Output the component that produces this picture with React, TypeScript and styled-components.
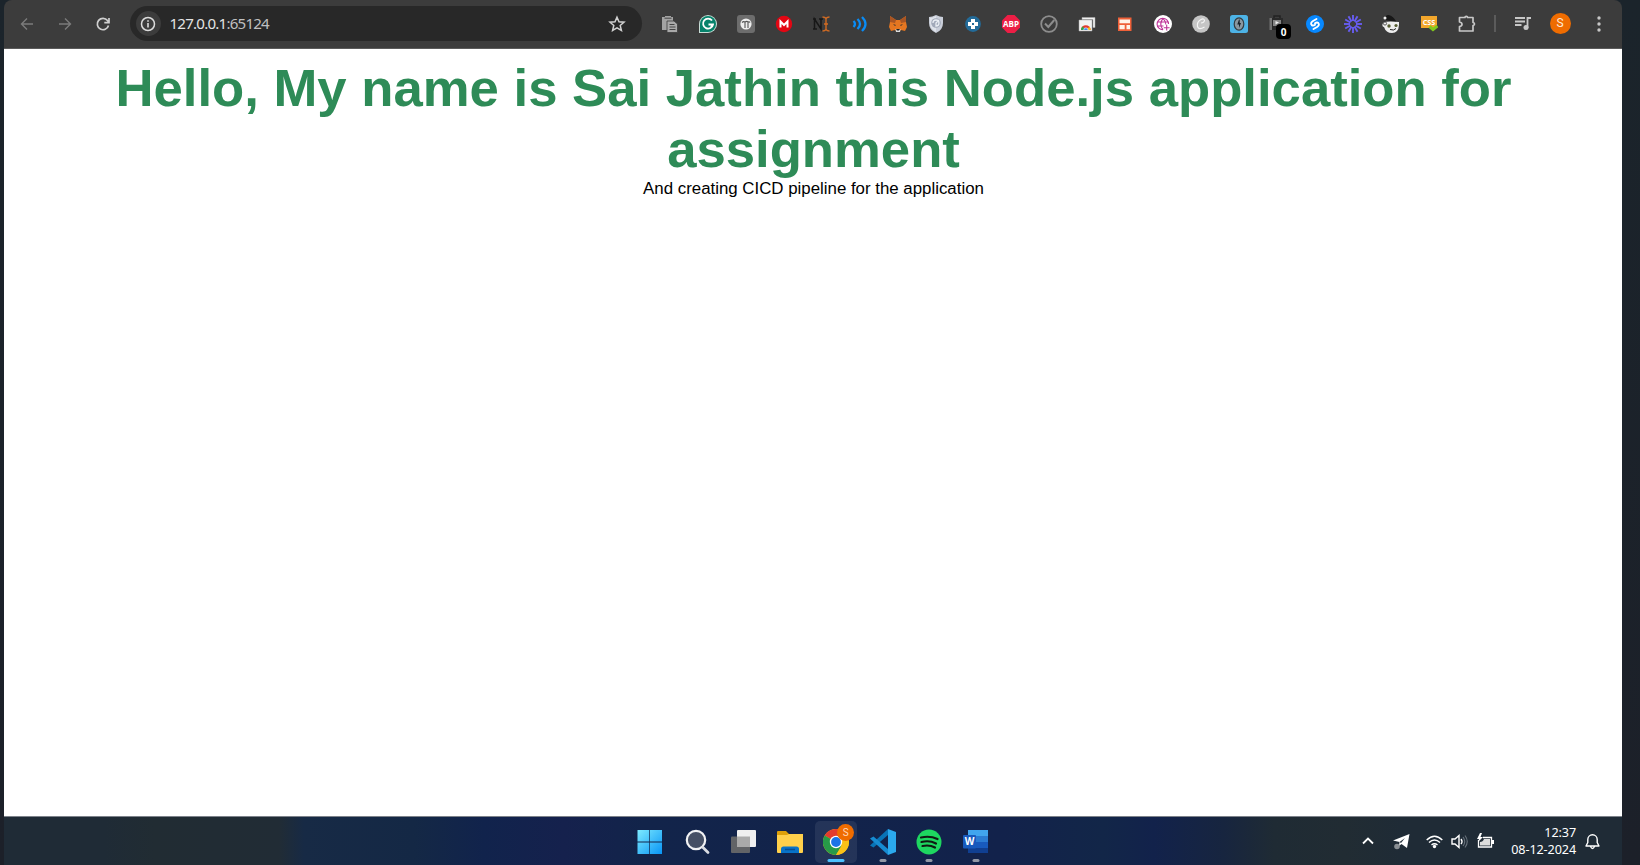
import React from "react";
import styled, { createGlobalStyle } from "styled-components";

const Global = createGlobalStyle`
  *{box-sizing:border-box}
  body{margin:0;background:#1b2229;font-family:"Liberation Sans",Arial,sans-serif;overflow:hidden}
`;
const Desktop = styled.div`
  width:1640px;height:865px;padding:0 18px 0 4px;
  background:linear-gradient(#1b242b,#1c2029);
  display:flex;flex-direction:column;
`;
const Toolbar = styled.header`
  height:49px;flex:none;background:#3c3c3c;border-bottom:1px solid #5b5b5b;
  border-radius:8px 8px 0 0;display:flex;align-items:center;padding:0 8px 1px 4px;
`;
const NavButton = styled.button<{ $dim?: boolean }>`
  width:38px;height:38px;border:0;padding:0;background:none;display:grid;place-items:center;
  color:${(p) => (p.$dim ? "#7b7b7b" : "#d0d0d0")};
`;
const AddressBar = styled.div`
  width:512px;height:35px;margin-left:8px;border-radius:18px;background:#282828;
  display:flex;align-items:center;padding:0 16px 0 5.5px;
`;
const SiteInfo = styled.span`
  width:25px;height:25px;border-radius:50%;background:#3c3c3c;color:#dcdcdc;display:grid;place-items:center;
`;
const Url = styled.span`
  flex:1;margin-left:9px;margin-top:-1px;font:15.1px "Noto Sans",sans-serif;letter-spacing:-0.78px;color:#e3e3e3;
  span{color:#c0c0c0}
`;
const Extensions = styled.div`
  display:flex;margin-left:9px;
`;
const Extension = styled.div`
  width:37.95px;height:38px;display:grid;place-items:center;position:relative;
`;
const Badge = styled.span`
  position:absolute;left:18px;top:19px;width:15px;height:15px;border-radius:4px;background:#000;color:#fff;
  font:bold 10px/16px "Open Sans",sans-serif;text-align:center;
`;
const Divider = styled.i`
  width:2px;height:17px;background:#5b5b5b;margin-left:8px;
`;
const MediaButton = styled.span`
  margin-left:18px;display:grid;color:#c7c7c7;
`;
const Avatar = styled.span`
  width:21px;height:21px;border-radius:50%;background:#ef6c00;color:#ffe9d8;margin-left:18px;margin-top:-1px;
  font:12px/21px Roboto,sans-serif;text-align:center;
`;
const MenuButton = styled.span`
  margin-left:19px;display:grid;color:#c7c7c7;
`;
const Page = styled.main`
  flex:1;background:#fff;text-align:center;padding:8px 7px 0 8px;
`;
const Title = styled.h1`
  margin:0;color:#2e8b57;font-size:52.68px;line-height:61px;font-weight:bold;
`;
const Subtitle = styled.p`
  margin:0;color:#000;font-size:16.85px;line-height:19px;
`;
const Taskbar = styled.footer`
  height:49px;flex:none;border-top:1px solid #7d828a;display:grid;grid-template-columns:1fr auto 1fr;
  background:linear-gradient(90deg,#1f2b36 0,#1f2b36 100px,#212c33 150px,#212c35 275px,#172a45 300px,#142845 410px,#11234c 480px,#15214d 560px,#12244a 640px,#12224b 1000px,#122648 1100px,#12224b 1150px,#17253f 1220px,#1f2b34 1270px,#212c33 1340px,#1f2b36 1400px);
`;
const Apps = styled.div`
  grid-column:2;display:flex;
`;
const AppButton = styled.div<{ $active?: boolean }>`
  width:42px;height:42px;margin:4px 2.25px 0;border-radius:5px;position:relative;display:grid;place-items:center;
  background:${(p) => (p.$active ? "rgba(255,255,255,.08)" : "none")};
`;
const Indicator = styled.i<{ $active?: boolean }>`
  position:absolute;bottom:1px;left:50%;transform:translateX(-50%);height:3px;border-radius:2px;
  width:${(p) => (p.$active ? 17 : 7)}px;background:${(p) => (p.$active ? "#4cc2ff" : "#9298a6")};
`;
const ProfileBadge = styled.span`
  position:absolute;left:22px;top:3px;width:17px;height:17px;border-radius:50%;background:#ef6c00;color:#ffd9bd;
  font:10px/17px Roboto,sans-serif;text-align:center;
`;
const Tray = styled.div`
  display:flex;align-items:center;justify-content:flex-end;padding-right:21px;color:#fff;
  svg{flex:none}
`;
const TrayItem = styled.span<{ $gap: number }>`
  display:grid;margin-right:${(p) => p.$gap}px;
`;
const Clock = styled.time`
  font:12.6px/17px "Noto Sans",sans-serif;letter-spacing:-.1px;text-align:right;margin-right:8px;white-space:nowrap;
`;

type DrawProps = { size?: number; box?: string; children: React.ReactNode };
const Draw = ({ size = 18, box = "0 0 18 18", children }: DrawProps) => (
  <svg width={size} height={size} viewBox={box} fill="none">{children}</svg>
);

const extensions: React.ReactNode[] = [
  <Draw key="copy"><path d="M1 2h3V1h6v1h2v4H6v9H1z" fill="#a3a3a3" /><path d="M3.500 3.200h7" stroke="#444" /><path d="M6 6h7l3.500 3v8.500H6z" fill="#a9a9a9" stroke="#3c3c3c" strokeWidth=".8" /><path d="M8.500 9.500h5M8.500 12h6M8.500 14.500h6" stroke="#444" /></Draw>,
  <Draw key="grammar"><path d="M0 18V9a9 9 0 1 1 9 9z" fill="#c8ddd6" /><path d="M1 17V9a8 8 0 1 1 8 8z" fill="#06826b" /><path d="M13 5.500A5 5 0 1 0 14 9.500h-4.500M14 9l-2 3" stroke="#fff" strokeWidth="1.800" /></Draw>,
  <Draw key="m"><rect width="18" height="18" rx="3" fill="#6d6d6d" /><circle cx="9" cy="9" r="5.600" fill="#eee" /><path d="M5 7.500q1.500-1.500 3-.5v6M8 7q2-1.200 3 0v6M11 7q1.500-.5 2 .5" stroke="#555" strokeWidth="1.100" /></Draw>,
  <Draw key="mega"><circle cx="9" cy="9" r="8.200" fill="#e30613" /><path d="M5.500 12.500V6.500L9 10l3.500-3.500v6" stroke="#fff" strokeWidth="2" /></Draw>,
  <Draw key="ni"><path d="M1.500 14V4l6.500 10V4M0 4h3M0 14h4M6 4h4" stroke="#171717" strokeWidth="1.500" /><path d="M9.500 2q2.500 0 3.500 1.500Q14 2 16.500 2M13 3v12M9.500 16q2.500 0 3.500-1.500 1 1.500 3.500 1.500M11 9h4" stroke="#d26b22" strokeWidth="1.400" /></Draw>,
  <Draw key="waves"><path d="M2.500 6q3 3 0 6M6.500 4q5 5 0 10M11 2q7 7 0 14" stroke="#098cf5" strokeWidth="2.300" /></Draw>,
  <Draw key="fox"><path d="m1 1 6 4h4l6-4v6l1 5-2 4-4-1-2 2H8l-2-2-4 1-2-4 1-5z" fill="#e47621" /><path d="m1 1 6 4-1 3-5-1zM17 1l-6 4 1 3 5-1z" fill="#a95523" /><path d="m4 9 3 1-1 1zM14 9l-3 1 1 1z" fill="#333" /><path d="M6.500 14h5L11 17H7z" fill="#ddd" /><path d="M7 14h4l-1 1.500H8z" fill="#222" /></Draw>,
  <Draw key="shield"><path d="M9 0q4 2 7 2v6q0 7-7 10Q2 15 2 8V2q3 0 7-2z" fill="#c9ced9" /><path d="M9 1v16Q3 14 3 8V3q3 0 6-2z" fill="#dfe3ea" /><circle cx="9" cy="8" r="4.800" fill="#a1a9b9" /><path d="M6 8a3 3 0 1 1 3 3V8l3-3" stroke="#e9edf3" strokeWidth="1.300" /></Draw>,
  <Draw key="plus"><circle cx="9" cy="9" r="7.900" fill="#236b99" /><path d="M9 4v10M4 9h10" stroke="#fff" strokeWidth="4" /><path d="M8 9h2" stroke="#236b99" strokeWidth="2" /></Draw>,
  <Draw key="abp"><path d="M5.500 0h7L18 5.500v7L12.500 18h-7L0 12.500v-7z" fill="#ed1e45" /><text x="9" y="12.200" textAnchor="middle" fontFamily="Open Sans, sans-serif" fontWeight="bold" fontSize="9" textLength="16" lengthAdjust="spacingAndGlyphs" fill="#fff">ABP</text></Draw>,
  <Draw key="check"><circle cx="9" cy="9" r="7.800" stroke="#8d8d8d" strokeWidth="1.800" /><path d="m5 8.500 3.300 3.500 6-7" stroke="#8d8d8d" strokeWidth="2" /></Draw>,
  <Draw key="store"><path d="M4 2.500h13v10h-2v-8H4z" fill="#f0f0f0" stroke="#aaa" strokeWidth=".5" /><path d="M1 5h13v11H1z" fill="#f2f2f2" stroke="#aaa" strokeWidth=".5" /><path d="M3 15a4.800 4.800 0 0 1 9.600 0" fill="#e33b2e" /><path d="M3 15a5 5 0 0 1 1.500-3.500L8 15z" fill="#2ba84a" /><path d="m8 15 3.500-3.300q1.200 1.300 1.200 3.300z" fill="#f9bd15" /><path d="M5.700 15a2.200 2.200 0 0 1 4.400 0" fill="#4285f4" stroke="#fff" strokeWidth=".6" /></Draw>,
  <Draw key="layout"><rect x="2" y="2.500" width="13.500" height="13.500" fill="#ef6038" /><path d="M3.500 4.500h10.500v3.700H3.500zM3.500 10h5.200v4.300H3.500zM10.500 10H14v4.300h-3.500z" fill="#fff3e8" /></Draw>,
  <Draw key="globe"><circle cx="9" cy="9" r="9" fill="#fff" /><g stroke="#bd3197" strokeWidth="1.100"><path d="M14.500 9A5.700 5.700 0 1 0 9 14.700M9 3.300q-4.500 5.700 0 11.400M9 3.300q3 3 2.800 6.200M4 7h10M4 11h5.500M12.700 9.800v5.800M9.800 12.700h5.800" /></g></Draw>,
  <Draw key="c"><circle cx="9" cy="9" r="8.800" fill="#c5c5c5" /><path d="M12.500 5.500Q12 3 9 4.500 4.500 7 5.500 11.500q1 4 7 .5M9 8q3 0 3.500-2.500" stroke="#f5f5f5" strokeWidth="1.200" /></Draw>,
  <Draw key="bolt"><rect width="18" height="18" rx="2.500" fill="#4db3e6" /><ellipse cx="9" cy="9" rx="4.800" ry="6.200" fill="#8997a0" stroke="#343c42" strokeWidth="1.200" /><path d="m9 4.500-1.700 5H9V13l2-5H9.700V4.500z" fill="#18222b" /></Draw>,
  <Draw key="bag"><path d="M2 3h13v12H2z" fill="#292929" /><path d="M1.500 3H4v12H1.500z" fill="#707070" /><path d="M6 3V1h6v2" stroke="#222" strokeWidth="1.500" /><path d="M5 5h8v6H5z" fill="#858585" /><path d="m7.500 6 3.500 1.500-3.500 2z" fill="#eee" /></Draw>,
  <Draw key="shazam"><circle cx="9" cy="9" r="9" fill="#0788ff" /><path d="M10.500 4 7 6Q4 8 5.700 10q1.300 1.300 3.300-.3M7.500 14l3.500-2q3-2 1.300-4Q11 6.700 9 8.300" stroke="#fff" strokeWidth="1.900" strokeLinecap="round" /></Draw>,
  <Draw key="burst"><g stroke="#675cf0" strokeWidth="1.900">{Array.from({ length: 12 }, (_, i) => <path key={i} d="M9 0v6" transform={`rotate(${i * 30} 9 9)`} />)}</g><circle cx="9" cy="9" r="3.700" stroke="#675cf0" /></Draw>,
  <Draw key="face"><path d="M3.500 5q-1-5 3-5 5 1 8 7z" fill="#181818" /><circle cx="3" cy="3" r="1.500" fill="#eee" /><path d="M2 7q6-1 15 0v3q-.5 8-7 8-6 0-8-6-2 0-1.500-3z" fill="#eee" /><circle cx="3" cy="8.500" r="1.600" fill="#eee" stroke="#222" strokeWidth=".7" /><circle cx="7" cy="11" r="1.700" fill="#565d31" /><circle cx="14" cy="10.500" r="1.600" fill="#565d31" /><path d="M8 14.500q4 1.500 6-1" stroke="#222" /></Draw>,
  <Draw key="css"><path d="M1 1h16v12H1z" fill="#f3a72c" /><text x="9" y="9.500" textAnchor="middle" fontFamily="Open Sans, sans-serif" fontWeight="bold" fontSize="7.200" textLength="12.500" lengthAdjust="spacingAndGlyphs" fill="#fff">CSS</text><path d="m9.500 11.500 3.500 3 4.500-3.500" stroke="#82c91e" strokeWidth="3" /></Draw>,
  <Draw key="puzzle"><path d="M1.500 2.500H7q0-1.200 1.300-1.200t1.300 1.200H15v5q1.500.2 1.500 1.500T15 10.500V16H1.500v-4.500q2.500-.3 2.500-2.200T1.500 7z" stroke="#c7c7c7" strokeWidth="1.700" strokeLinejoin="round" /></Draw>,
];

const Back = () => <Draw size={16} box="0 0 16 16"><path d="M14 8H2.500M8 2.500 2.500 8 8 13.500" stroke="currentColor" strokeWidth="1.400" /></Draw>;
const Forward = () => <Draw size={16} box="0 0 16 16"><path d="M2 8h11.500M8 2.500 13.500 8 8 13.500" stroke="currentColor" strokeWidth="1.400" /></Draw>;
const Reload = () => <Draw size={16} box="0 0 16 16"><path d="M13.500 9.500A5.700 5.700 0 1 1 12.500 4.500L14 6.500M14 2v4.700H9.300" stroke="currentColor" strokeWidth="1.700" /></Draw>;

const Windows = () => <Draw size={26} box="0 0 26 26"><defs><linearGradient id="win" x2="1" y2="1"><stop stopColor="#7deaff" /><stop offset="1" stopColor="#0895f5" /></linearGradient></defs><path d="M.5 1h11.800v11.600H.5zM13 1h12v11.600H13zM.5 13.400h11.800V25H.5zM13 13.400h12V25H13z" fill="url(#win)" /></Draw>;
const Search = () => <Draw size={26} box="0 0 26 26"><circle cx="12" cy="11" r="9.200" fill="#465065" stroke="#f1f2f4" strokeWidth="2.200" /><path d="m19 18.500 5 5" stroke="#d9dce2" strokeWidth="2.800" strokeLinecap="round" /></Draw>;
const TaskView = () => <Draw size={26} box="-1 0 26 26"><rect x="0" y="7.500" width="19" height="16.500" rx="1" fill="#626467" /><rect x="6" y="1" width="19" height="17" rx="1" fill="#efefef" /><path d="M6 7.500h13V18H6z" fill="#aaa" /></Draw>;
const Folder = () => <Draw size={26} box="0 0 26 26"><path d="M0 3q0-1 1-1h8l3 3h13v4H0z" fill="#dea009" /><path d="M0 6h10l2-1h14v18q0 1-1 1H1q-1 0-1-1z" fill="#ffd04b" /><path d="M4 24v-4q0-2.500 2.500-2.500h13q2.500 0 2.500 2.500v4z" fill="#0873c8" /><path d="M8 20.500h10" stroke="#064e93" strokeWidth="1.500" /></Draw>;
const Chrome = () => <Draw size={26} box="0 0 26 26"><circle cx="13" cy="13" r="13" fill="#fbc116" /><path d="M13 13 1.740 6.500A13 13 0 0 1 24.260 6.500z" fill="#e33b2e" /><path d="M1.740 6.500A13 13 0 0 0 13 26l5.800-9.500L13 13z" fill="#279b48" /><path d="M13 7h11.500A13 13 0 0 1 13 26l5.500-9z" fill="#fbc116" /><circle cx="13" cy="13" r="6.200" fill="#fff" /><circle cx="13" cy="13" r="4.900" fill="#1a73e8" /></Draw>;
const Code = () => <Draw size={26} box="0 0 26 26"><path d="M18 6 3.500 18.500 0 16.500 18 0z" fill="#0873b6" /><path d="M18 20 3.500 7.500 0 9.500 18 26z" fill="#168bd1" /><path d="m18 0 8 3v20l-8 3z" fill="#2ba9ed" /></Draw>;
const Music = () => <Draw size={26} box="0 0 26 26"><circle cx="13" cy="13" r="12.500" fill="#1ed760" /><path d="M5 8.500q9-2 16.500 1.500M5.500 13q8-2 14.500 1.500M6.500 17q7-1.500 12.500 1.500" stroke="#101b13" strokeWidth="2.200" strokeLinecap="round" /></Draw>;
const Word = () => <Draw size={26} box="0 0 26 26"><path d="M5 1h20v6H5z" fill="#41a5ee" /><path d="M5 7h20v6H5z" fill="#2b7cd3" /><path d="M5 13h20v6H5z" fill="#185abd" /><path d="M5 19h20v5H5z" fill="#103f91" /><rect y="6" width="13" height="13.500" rx="1" fill="#185abd" /><text x="6.500" y="16.300" textAnchor="middle" fontFamily="Open Sans, sans-serif" fontWeight="bold" fontSize="10" fill="#fff">W</text></Draw>;

const apps = [Windows, Search, TaskView, Folder, Chrome, Code, Music, Word];

export default function App() {
  return (
    <Desktop>
      <Global />
      <Toolbar>
        <NavButton $dim><Back /></NavButton>
        <NavButton $dim><Forward /></NavButton>
        <NavButton><Reload /></NavButton>
        <AddressBar>
          <SiteInfo><Draw size={16} box="0 0 16 16"><circle cx="8" cy="8" r="6.500" stroke="currentColor" strokeWidth="1.500" /><path d="M8 7v4.500M8 4.300v1.500" stroke="currentColor" strokeWidth="1.600" /></Draw></SiteInfo>
          <Url>127.0.0.1<span>:65124</span></Url>
          <Draw size={18}><path d="m9 2.200 2 4.600 5 .4-3.800 3.300 1.200 4.900L9 12.800l-4.400 2.600 1.200-4.900L2 7.200l5-.4z" stroke="#d2d2d2" strokeWidth="1.500" /></Draw>
        </AddressBar>
        <Extensions>
          {extensions.map((icon, i) => <Extension key={i}>{icon}{i === 16 && <Badge>0</Badge>}</Extension>)}
        </Extensions>
        <Divider />
        <MediaButton><Draw size={18}><path d="M1 3h10M1 6.500h10M1 10h6.500M13.500 13V3H17" stroke="currentColor" strokeWidth="1.800" /><circle cx="12" cy="12.500" r="2.500" fill="currentColor" /></Draw></MediaButton>
        <Avatar>S</Avatar>
        <MenuButton><Draw size={18}><g fill="currentColor"><circle cx="9" cy="3" r="1.700" /><circle cx="9" cy="9" r="1.700" /><circle cx="9" cy="15" r="1.700" /></g></Draw></MenuButton>
      </Toolbar>
      <Page>
        <Title>Hello, My name is Sai Jathin this Node.js application for assignment</Title>
        <Subtitle>And creating CICD pipeline for the application</Subtitle>
      </Page>
      <Taskbar>
        <Apps>
          {apps.map((Icon, i) => (
            <AppButton key={i} $active={i === 4}>
              <Icon />
              {i === 4 && <ProfileBadge>S</ProfileBadge>}
              {i >= 4 && <Indicator $active={i === 4} />}
            </AppButton>
          ))}
        </Apps>
        <Tray>
          <TrayItem $gap={18}><Draw size={14} box="0 0 14 14"><path d="m2 9.500 5-5 5 5" stroke="currentColor" strokeWidth="1.800" /></Draw></TrayItem>
          <TrayItem $gap={16}><Draw size={17} box="0 0 17 17"><path d="M0 7.500 16.500 1 14 15l-5.500-4L6 13l.5-4z" fill="currentColor" /><path d="m6.500 9 5.500-4-4 5" fill="#27323d" /><circle cx="4" cy="13.500" r="2.800" fill="#8a8f94" /></Draw></TrayItem>
          <TrayItem $gap={8}><Draw size={17} box="0 0 17 17"><path d="M.7 7q7.800-7.500 15.600 0M3 9.500q5.500-5 11 0M5.500 12q3-2.500 6 0" stroke="currentColor" strokeWidth="1.500" /><circle cx="8.500" cy="13.500" r="1.700" fill="currentColor" /></Draw></TrayItem>
          <TrayItem $gap={9}><Draw size={17} box="0 0 17 17"><path d="M1 6h3l4-3.500v12L4 11H1zM10 6q2 2.500 0 5" stroke="currentColor" strokeWidth="1.400" /><path d="M12 4q3.500 4.500 0 9M14 2.500q4.500 6 0 12" stroke="#68727c" strokeWidth="1.100" /></Draw></TrayItem>
          <TrayItem $gap={17}><Draw size={17} box="0 0 17 17"><path d="M1.500 7v7h13V4.500H6" stroke="currentColor" strokeWidth="1.300" /><path d="M3 9q3 0 4-3h6v6.500H3z" fill="#ddd" /><path d="M15 7h2v4h-2zM3 0 0 6h2L1 9l5-5H3.500L5 0z" fill="currentColor" /></Draw></TrayItem>
          <Clock>12:37<br />08-12-2024</Clock>
          <Draw size={17} box="0 0 17 17"><path d="M2 13 3.800 9.500V6.500a4.700 4.700 0 0 1 9.400 0v3L15 13zM6.500 13.500q2 4 4 0" stroke="currentColor" strokeWidth="1.400" strokeLinejoin="round" /></Draw>
        </Tray>
      </Taskbar>
    </Desktop>
  );
}
